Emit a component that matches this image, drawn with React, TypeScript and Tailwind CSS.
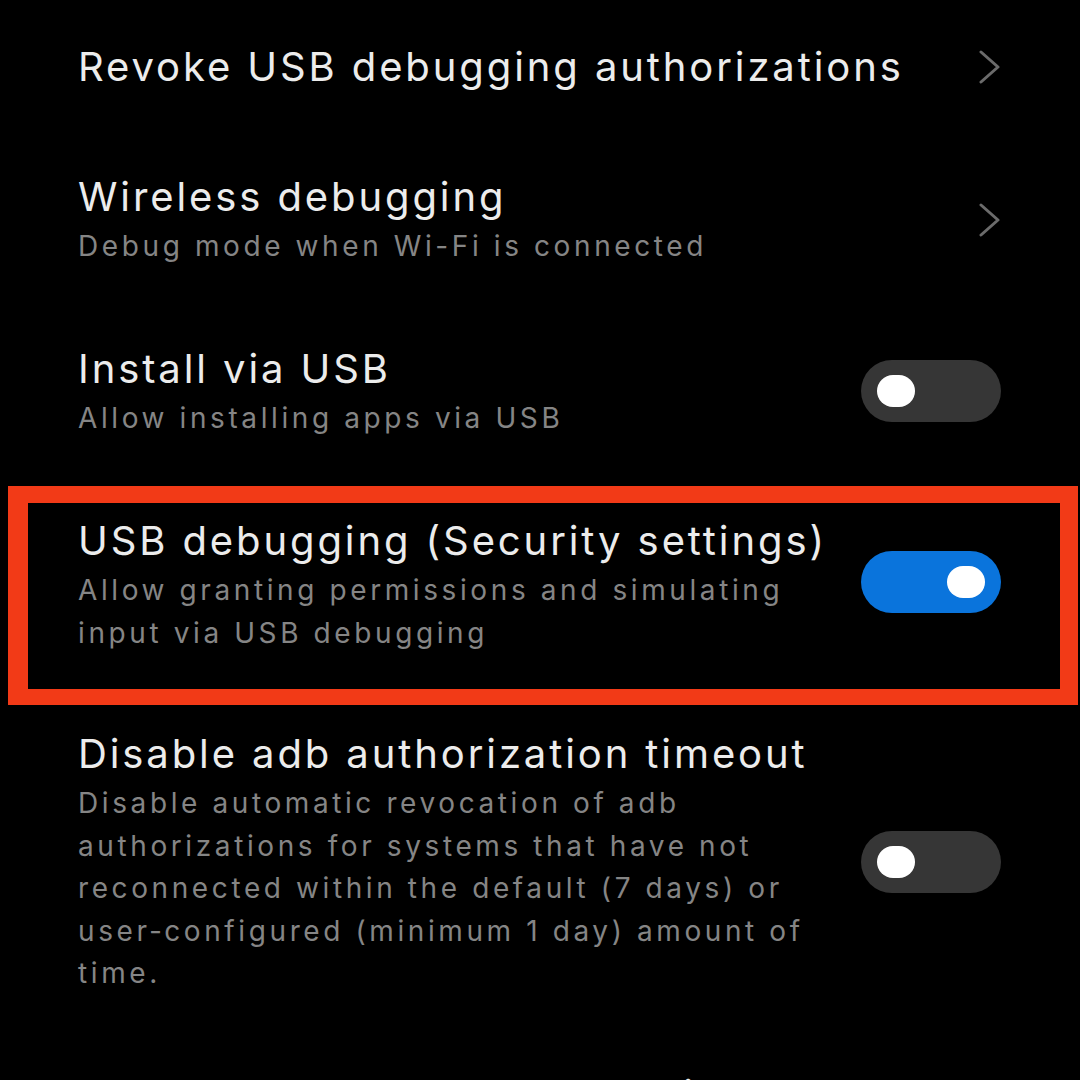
import React from "react";

const Chevron = () => (
  <svg width="22" height="34" viewBox="0 0 22 34" fill="none" className="shrink-0">
    <path d="M2 2 L19 17 L2 32" stroke="#6b6b6b" strokeWidth="3" strokeLinecap="round" strokeLinejoin="round" />
  </svg>
);

const Toggle = ({ on }: { on?: boolean }) => (
  <div
    className={
      on
        ? "w-[140px] h-[62px] mb-[6px] rounded-full bg-[#0a74dc] flex items-center justify-end pr-[16px] shrink-0"
        : "w-[140px] h-[62px] rounded-full bg-[#363636] flex items-center justify-start pl-[16px] shrink-0"
    }
  >
    <div className="w-[38px] h-[32px] rounded-full bg-white" />
  </div>
);

type RowProps = {
  title: string;
  sub?: React.ReactNode;
  right?: React.ReactNode;
};

const Row = ({ title, sub, right }: RowProps) => (
  <div className="flex items-center justify-between">
    <div className="w-[745px]">
      <div className="text-[40px] leading-[50px] tracking-[2.9px] text-[#ececec] whitespace-nowrap">{title}</div>
      {sub && (
        <div className="mt-[3px] text-[28px] leading-[42.5px] tracking-[3.6px] text-[#858585]">{sub}</div>
      )}
    </div>
    {right}
  </div>
);

export default function App() {
  return (
    <div
      className="w-[1080px] h-[1080px] bg-black overflow-hidden flex flex-col"
      style={{ fontFamily: "Inter, Roboto, sans-serif" }}
    >
      <div className="pt-[42px] pl-[78px] pr-[79px]">
        <Row title="Revoke USB debugging authorizations" right={<Chevron />} />
      </div>
      <div className="mt-[80px] pl-[78px] pr-[79px]">
        <Row title="Wireless debugging" sub="Debug mode when Wi-Fi is connected" right={<Chevron />} />
      </div>
      <div className="mt-[76px] pl-[78px] pr-[79px]">
        <Row title="Install via USB" sub="Allow installing apps via USB" right={<Toggle />} />
      </div>
      <div className="mt-[47px] ml-[8px] w-[1070px] border-[#f23a17] border-l-[20px] border-r-[18px] border-t-[17px] border-b-[16px] pt-[13px] pb-[35px] pl-[50px] pr-[59px]">
        <Row
          title="USB debugging (Security settings)"
          sub="Allow granting permissions and simulating input via USB debugging"
          right={<Toggle on />}
        />
      </div>
      <div className="mt-[24px] pl-[78px] pr-[79px]">
        <Row
          title="Disable adb authorization timeout"
          sub="Disable automatic revocation of adb authorizations for systems that have not reconnected within the default (7 days) or user‑configured (minimum 1 day) amount of time."
          right={<Toggle />}
        />
      </div>
      <div className="mt-[75px] pl-[78px] pr-[79px]">
        <div className="text-[40px] leading-[50px] tracking-[2.9px] text-[#ececec] whitespace-nowrap">
          Enable verbose vendor logging
        </div>
      </div>
    </div>
  );
}
